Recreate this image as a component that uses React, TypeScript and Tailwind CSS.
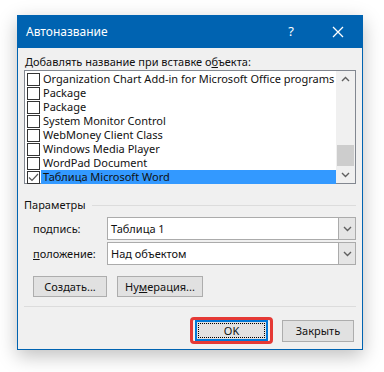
import React from 'react';

const items = [
  'Organization Chart Add-in for Microsoft Office programs',
  'Package',
  'Package',
  'System Monitor Control',
  'WebMoney Client Class',
  'Windows Media Player',
  'WordPad Document',
  'Таблица Microsoft Word',
];

function Chevron({ up = false }: { up?: boolean }) {
  return (
    <svg width="9" height="6" viewBox="0 0 9 6" className={up ? 'rotate-180' : ''}>
      <path d="M1 1 L4.5 4.5 L8 1" fill="none" stroke="#606060" strokeWidth="1.4" />
    </svg>
  );
}

function Combo({ label, u, rest, value }: { label: string; u: string; rest: string; value: string }) {
  return (
    <div className="flex items-center h-[23px]">
      <div className="w-[82px] pl-[8px] text-[11px] leading-[14px]">
        {label}
        <span className="underline">{u}</span>
        {rest}
      </div>
      <div className="flex-1 flex h-full bg-white border border-[#ababab]">
        <div className="flex-1 flex items-center pl-[3px] text-[11px] leading-[14px]">{value}</div>
        <div className="w-[17px] bg-[#e5e5e5] border-l border-[#ababab] flex items-center justify-center">
          <Chevron />
        </div>
      </div>
    </div>
  );
}

export default function App() {
  return (
    <div
      className="w-[384px] h-[372px] bg-white pt-[15px] pl-[17px] text-[#111]"
      style={{ fontFamily: '"Segoe UI", "Noto Sans", sans-serif' }}
    >
      <div className="w-[346px] h-[335px] bg-[#f0f0f0] border border-[#0063b1] border-t-0 shadow-[0_6px_18px_rgba(0,0,0,0.25)] flex flex-col">
        {/* Заголовок */}
        <div className="h-[33px] shrink-0 bg-[#0063b1] text-white flex items-center pl-[8px] pr-[18px]">
          <span className="text-[12px] flex-1">Автоназвание</span>
          <span className="text-[13px] mr-[38px]">?</span>
          <svg width="12" height="12" viewBox="0 0 12 12">
            <path d="M1 1 L11 11 M11 1 L1 11" stroke="white" strokeWidth="1.3" />
          </svg>
        </div>

        <div className="px-[6px] flex flex-col">
          <div className="text-[11px] mt-[6px] h-[16px] leading-[16px] pl-[1px]">
            Добавлять название при вставке о<span className="underline">б</span>ъекта:
          </div>

          {/* Список */}
          <div className="h-[114px] bg-white border border-[#828790] flex">
            <div className="flex-1 pt-[1px] pl-[2px]">
              {items.map((it, i) => {
                const sel = i === items.length - 1;
                return (
                  <div key={i} className="h-[14px] flex items-center">
                    <div className="w-[13px] h-[13px] border border-[#333] bg-white flex items-center justify-center shrink-0">
                      {sel && (
                        <svg width="11" height="11" viewBox="0 0 11 11">
                          <path d="M1 5.5 L4 8.5 L10 2" fill="none" stroke="#555" strokeWidth="1.2" />
                        </svg>
                      )}
                    </div>
                    <div
                      className={`flex-1 h-full ml-[1px] pl-[2px] text-[11px] leading-[14px] whitespace-nowrap ${
                        sel ? 'bg-[#3399ff]' : ''
                      }`}
                    >
                      {it}
                    </div>
                  </div>
                );
              })}
            </div>
            <div className="w-[19px] bg-[#f0f0f0] flex flex-col items-center">
              <div className="h-[17px] flex items-center justify-center">
                <Chevron up />
              </div>
              <div className="flex-1 w-full px-[1px] pt-[57px] pb-[1px]">
                <div className="h-[21px] bg-[#cdcdcd]" />
              </div>
              <div className="h-[17px] flex items-center justify-center">
                <Chevron />
              </div>
            </div>
          </div>

          {/* Параметры */}
          <div className="mt-[13px] flex items-center h-[16px]">
            <span className="text-[11px] leading-[14px]">Параметры</span>
            <div className="flex-1 h-px bg-[#dcdcdc] ml-[6px]" />
          </div>

          <div className="mt-[4px] flex flex-col gap-[2px] pl-[1px]">
            <Combo label="по" u="д" rest="пись:" value="Таблица 1" />
            <Combo label="" u="п" rest="оложение:" value="Над объектом" />
          </div>

          <div className="mt-[11px] flex gap-[10px] pl-[9px]">
            <button className="w-[74px] h-[21px] bg-[#e1e1e1] border border-[#adadad] text-[11px] leading-[14px]">
              Соз<span className="underline">д</span>ать...
            </button>
            <button className="w-[86px] h-[21px] bg-[#e1e1e1] border border-[#adadad] text-[11px] leading-[14px]">
              Ну<span className="underline">м</span>ерация...
            </button>
          </div>

          <div className="mt-[9px] h-px bg-[#dcdcdc]" />

          <div className="mt-[10px] flex justify-end items-center gap-[9px]">
            <div className="border-[3px] border-[#e53935] rounded-[4px] px-[2px]">
              <button className="w-[73px] h-[21px] bg-[#e1e1e1] border-2 border-[#0078d7] flex items-center justify-center p-[1px]">
                <div className="w-full h-full border border-dotted border-black flex items-center justify-center text-[11px] leading-[14px]">
                  OK
                </div>
              </button>
            </div>
            <button className="w-[72px] h-[22px] bg-[#e1e1e1] border border-[#adadad] text-[11px] leading-[14px] mr-[2px]">
              Закрыть
            </button>
          </div>
        </div>
      </div>
    </div>
  );
}
